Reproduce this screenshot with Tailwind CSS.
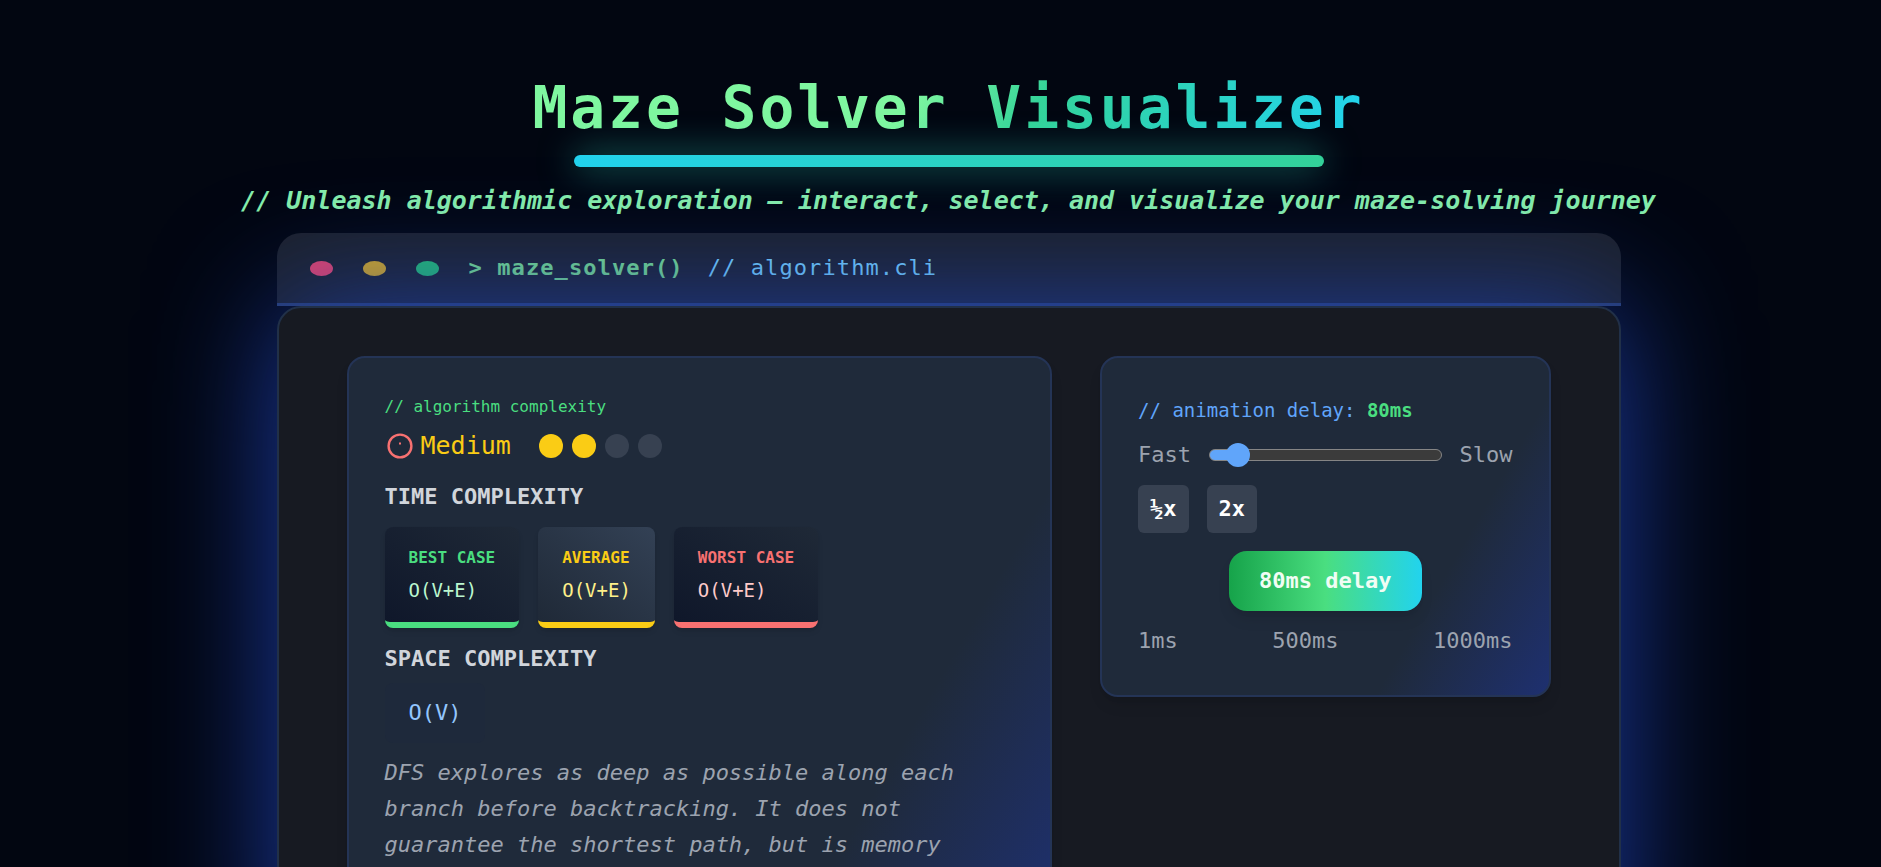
<!DOCTYPE html>
<html lang="en">
<head>
  <meta charset="UTF-8">
  <meta name="viewport" content="width=device-width, initial-scale=1.0">
  <title>Maze Solver Visualizer</title>
  <script src="https://cdn.jsdelivr.net/npm/@tailwindcss/browser@4"></script>
</head>
<body class="min-h-screen overflow-x-hidden bg-[#020611] pl-4 font-['DejaVu_Sans_Mono','Liberation_Mono',monospace] text-[22px] leading-9 text-[#9ca3af]">
  <header class="flex flex-col items-center pt-[72px] text-center">
    <h1 class="bg-[linear-gradient(120deg,#7ff7a0_45%,#34d399_60%,#22d3ee_98%)] bg-clip-text text-[58px] leading-[72px] font-bold tracking-wider text-transparent">Maze Solver Visualizer</h1>
    <div class="mt-[11px] h-3 w-[750px] max-w-full rounded-full bg-[linear-gradient(120deg,#22d3ee,#34d399)] shadow-[0_0_36px_#2dd4bfaa]"></div>
    <p class="mt-4 text-[25px] font-bold text-[#86efac] italic">// Unleash algorithmic exploration — interact, select, and visualize your maze-solving journey</p>
  </header>

  <main class="mx-auto mt-[14px] max-w-[1344px]">
    <!-- terminal bar -->
    <div class="flex h-[73px] items-center rounded-t-3xl border-b-[3px] border-[#2a3f70] bg-[#1c212b] px-[33px] tracking-wider">
      <div class="flex gap-[30px]">
        <span class="h-[15px] w-[23px] rounded-[50%] bg-[#e2446b]"></span>
        <span class="h-[15px] w-[23px] rounded-[50%] bg-[#d6a91f]"></span>
        <span class="h-[15px] w-[23px] rounded-[50%] bg-[#25bd70]"></span>
      </div>
      <span class="ml-[30px] font-bold text-[#78e08c]">&gt; maze_solver()</span>
      <span class="ml-6 text-[#76d4ff]">// algorithm.cli</span>
    </div>

    <!-- terminal body -->
    <div class="relative grid grid-cols-[47fr_30fr] items-start gap-12 rounded-3xl border-2 border-[#213048] bg-[#171a22] px-[68px] py-12 shadow-[0_0_124px_#1e40afe6]">
      <section class="rounded-[18px] border-2 border-[#243456] bg-[linear-gradient(120deg,#1f2a3a_75%,#1e3070)] p-9 shadow-lg">
        <p class="text-base leading-[25px] text-[#4ade80]">// algorithm complexity</p>
        <div class="mt-[9px] flex items-center">
          <svg class="size-[30px]" viewBox="0 0 30 30" fill="none" stroke="#f87171" stroke-width="2.4">
            <circle cx="15" cy="15" r="11.4"/>
            <rect x="14" y="11.5" width="2" height="2" fill="#f87171" stroke="none"/>
          </svg>
          <span class="ml-1.5 text-[25px] text-[#facc15]">Medium</span>
          <div class="ml-7 flex gap-[9px]">
            <span class="size-6 rounded-full bg-[#facc15]"></span>
            <span class="size-6 rounded-full bg-[#facc15]"></span>
            <span class="size-6 rounded-full bg-[#374151]"></span>
            <span class="size-6 rounded-full bg-[#374151]"></span>
          </div>
        </div>

        <h2 class="mt-[15px] font-bold text-[#d1d5db]">TIME COMPLEXITY</h2>
        <div class="mt-3 flex gap-[19px]">
          <div class="rounded-lg border-b-[6px] border-[#4ade80] bg-linear-to-tr from-[#0f172a] to-[#1f2937] px-6 pt-[19px] pb-[18px] shadow-md">
            <p class="text-base leading-6 font-bold text-[#4ade80]">BEST CASE</p>
            <p class="mt-1.5 text-[19px] leading-7 text-[#bbf7d0]">O(V+E)</p>
          </div>
          <div class="rounded-lg border-b-[6px] border-[#facc15] bg-linear-to-tr from-[#1f2937] to-[#334155] px-6 pt-[19px] pb-[18px] shadow-md">
            <p class="text-base leading-6 font-bold text-[#facc15]">AVERAGE</p>
            <p class="mt-1.5 text-[19px] leading-7 text-[#fef08a]">O(V+E)</p>
          </div>
          <div class="rounded-lg border-b-[6px] border-[#f87171] bg-linear-to-tr from-[#0f172a] to-[#1f2937] px-6 pt-[19px] pb-[18px] shadow-md">
            <p class="text-base leading-6 font-bold text-[#f87171]">WORST CASE</p>
            <p class="mt-1.5 text-[19px] leading-7 text-[#fecaca]">O(V+E)</p>
          </div>
        </div>

        <h2 class="mt-[13px] font-bold text-[#d1d5db]">SPACE COMPLEXITY</h2>
        <p class="mt-1.5 w-fit rounded-lg bg-[#1e293b] px-6 py-3 text-[#93c5fd]">O(V)</p>
        <p class="mt-3 italic">DFS explores as deep as possible along each branch before backtracking. It does not guarantee the shortest path, but is memory efficient.</p>
      </section>

      <section class="rounded-[18px] border-2 border-[#243456] bg-[linear-gradient(120deg,#1f2a3a_73%,#1e3070)] p-9 shadow-lg">
        <label for="delay" class="block text-[19px] leading-[33px] text-[#60a5fa]">// animation delay: <b id="delayValue" class="text-[#4ade80]">80ms</b></label>
        <div class="mt-2.5 flex items-center gap-[18px]">
          <span>Fast</span>
          <input type="range" id="delay" min="1" max="1000" value="80" class="h-3 min-w-0 flex-1 appearance-none rounded-full border border-[#858585] bg-[linear-gradient(90deg,#60a5fa_12%,#3b3b3b_12%)] [&::-webkit-slider-thumb]:size-6 [&::-webkit-slider-thumb]:appearance-none [&::-webkit-slider-thumb]:rounded-full [&::-webkit-slider-thumb]:bg-[#60a5fa]">
          <span>Slow</span>
        </div>
        <div class="mt-3 flex gap-[18px]">
          <button type="button" id="half" class="h-12 rounded-md bg-[#374151] px-3 font-bold text-white">½x</button>
          <button type="button" id="double" class="h-12 rounded-md bg-[#374151] px-3 font-bold text-white">2x</button>
        </div>
        <button type="button" id="delayButton" class="mx-auto mt-[18px] block h-15 rounded-[18px] bg-linear-to-r/srgb from-[#16a34a] via-[#4ade80] to-[#22d3ee] px-[30px] font-bold text-[#f0fdf4] shadow-lg">80ms delay</button>
        <div class="mt-3 flex justify-between">
          <span>1ms</span>
          <span>500ms</span>
          <span>1000ms</span>
        </div>
      </section>
    </div>
  </main>

  <script>
    const slider = document.getElementById('delay');
    const setDelay = (ms) => {
      slider.value = Math.round(ms);
      document.getElementById('delayValue').textContent = `${slider.value}ms`;
      document.getElementById('delayButton').textContent = `${slider.value}ms delay`;
      const fill = 5 + (slider.value / 1000) * 90;
      slider.style.backgroundImage = `linear-gradient(90deg, #60a5fa ${fill}%, #3b3b3b ${fill}%)`;
    };
    slider.addEventListener('input', () => setDelay(slider.value));
    document.getElementById('half').addEventListener('click', () => setDelay(slider.value / 2));
    document.getElementById('double').addEventListener('click', () => setDelay(slider.value * 2));
    setDelay(80);
  </script>
</body>
</html>
